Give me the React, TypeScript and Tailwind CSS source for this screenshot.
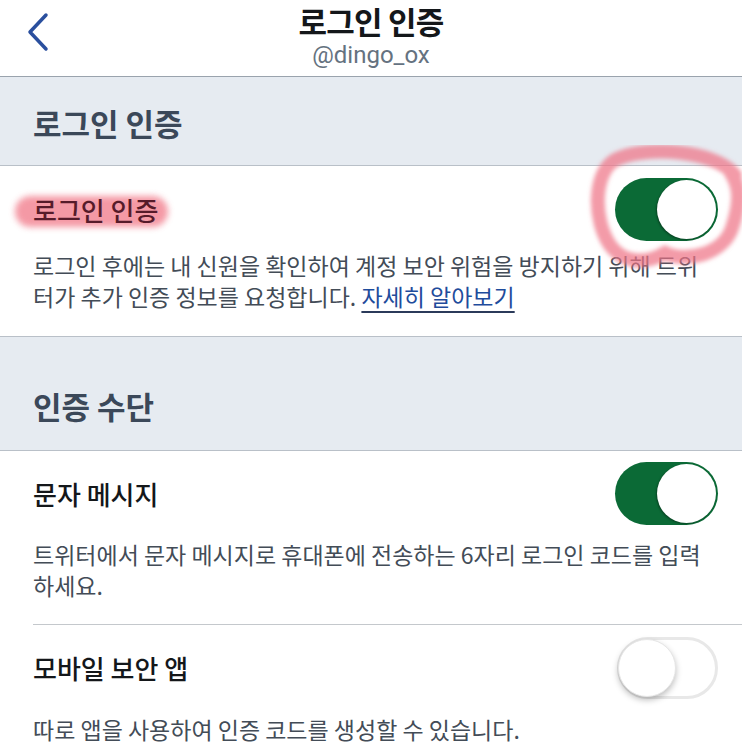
import React, { useState } from 'react';

const font = { fontFamily: '"Noto Sans CJK KR", "Noto Sans", sans-serif' };

const Toggle = ({ on, onClick }: { on: boolean; onClick: () => void }) => {
  if (on) {
    return (
      <button onClick={onClick} className="relative w-[103px] h-[63px] shrink-0 rounded-full bg-[#0b6a36]">
        <span className="absolute right-[2px] top-[2px] w-[59px] h-[59px] rounded-full bg-white shadow-[-1px_1px_2px_rgba(0,0,0,0.35)]" />
      </button>
    );
  }
  return (
    <button onClick={onClick} className="relative w-[101px] h-[62px] shrink-0 rounded-full bg-white border-[3px] border-[#e8e8e8]">
      <span className="absolute left-[-2px] top-[-1px] w-[58px] h-[58px] rounded-full bg-white shadow-[0_3px_6px_rgba(0,0,0,0.26)] border border-[#e6e6e6]" />
    </button>
  );
};

const App = () => {
  const [loginVerify, setLoginVerify] = useState(true);
  const [sms, setSms] = useState(true);
  const [app, setApp] = useState(false);

  return (
    <div style={font} className="relative w-[742px] h-[742px] overflow-hidden bg-white">
      {/* header */}
      <div className="relative flex flex-col items-center pt-[2px] pb-[6px] border-b border-[#9aa3ad]">
        <svg className="absolute left-[24px] top-[12px]" width="28" height="42" viewBox="0 0 28 42">
          <polyline points="22,3 6,20 22,37" fill="none" stroke="#2a4f9e" strokeWidth="3.5" strokeLinecap="round" strokeLinejoin="round" />
        </svg>
        <div className="text-[31px] leading-[38px] font-bold tracking-[-0.8px] text-[#14171a]">로그인 인증</div>
        <div className="text-[24px] leading-[30px] text-[#657280]" style={{ fontFamily: 'Roboto, "Liberation Sans", sans-serif' }}>@dingo_ox</div>
      </div>

      {/* section 1 */}
      <div className="h-[89px] bg-[#e6ebf1] flex items-center pl-[33px] pt-[4px] border-b border-[#b9c0c8]">
        <span className="text-[31px] leading-[38px] font-semibold text-[#3b4859]">로그인 인증</span>
      </div>

      {/* login verification row */}
      <div className="pl-[33px] pr-[24px] pt-[12px] pb-[24px] border-b border-[#b9c0c8]">
        <div className="flex items-center justify-between h-[63px]">
          <div className="relative">
            <span className="absolute left-[-18px] right-[-10px] top-[7px] h-[31px] rounded-full bg-[#f2808f] opacity-80 blur-[3px]" />
            <span className="relative text-[26px] leading-[42px] font-medium text-[#561b2a]">로그인 인증</span>
          </div>
          <Toggle on={loginVerify} onClick={() => setLoginVerify(!loginVerify)} />
        </div>
        <p className="mt-[9px] text-[23px] leading-[31px] text-[#434c57] whitespace-nowrap">
          로그인 후에는 내 신원을 확인하여 계정 보안 위험을 방지하기 위해 트위
          <br />
          터가 추가 인증 정보를 요청합니다.{' '}
          <a href="#" className="text-[#1f4c9c] underline decoration-[#2b3a5a] decoration-2 underline-offset-[5px]">자세히 알아보기</a>
        </p>
      </div>

      {/* section 2 */}
      <div className="h-[114px] bg-[#e6ebf1] flex items-end pl-[33px] pb-[25px] border-b border-[#b9c0c8]">
        <span className="text-[31px] leading-[38px] font-semibold text-[#3b4859]">인증 수단</span>
      </div>

      {/* sms row */}
      <div className="pl-[33px]">
        <div className="pr-[24px] pt-[11px] pb-[23px] border-b border-[#c4c8cc]">
          <div className="flex items-center justify-between h-[63px]">
            <span className="text-[26px] font-medium text-[#14171a]">문자 메시지</span>
            <Toggle on={sms} onClick={() => setSms(!sms)} />
          </div>
          <p className="mt-[14px] text-[23px] leading-[31px] text-[#434c57] whitespace-nowrap">
            트위터에서 문자 메시지로 휴대폰에 전송하는 6자리 로그인 코드를 입력
            <br />
            하세요.
          </p>
        </div>

        {/* mobile app row */}
        <div className="pr-[24px] pt-[11px]">
          <div className="flex items-center justify-between h-[63px]">
            <span className="text-[26px] font-medium text-[#14171a]">모바일 보안 앱</span>
            <Toggle on={app} onClick={() => setApp(!app)} />
          </div>
          <p className="mt-[17px] text-[23px] leading-[26px] text-[#434c57] whitespace-nowrap">
            따로 앱을 사용하여 인증 코드를 생성할 수 있습니다.
          </p>
        </div>
      </div>

      {/* hand-drawn annotation ring */}
      <svg className="absolute left-[585px] top-[145px] pointer-events-none" width="157" height="125" viewBox="0 0 157 125">
        <defs>
          <filter id="soft" x="-20%" y="-20%" width="140%" height="140%">
            <feGaussianBlur stdDeviation="2" />
          </filter>
        </defs>
        <path
          d="M150 30 C 130 5, 60 0, 30 15 C 8 28, 8 75, 25 100 C 38 118, 60 120, 80 108 C 100 118, 140 110, 148 80 C 156 55, 154 40, 146 28"
          fill="none"
          stroke="#ee7586"
          strokeOpacity="0.72"
          strokeWidth="14"
          strokeLinecap="round"
          filter="url(#soft)"
        />
      </svg>
    </div>
  );
};

export default App;
